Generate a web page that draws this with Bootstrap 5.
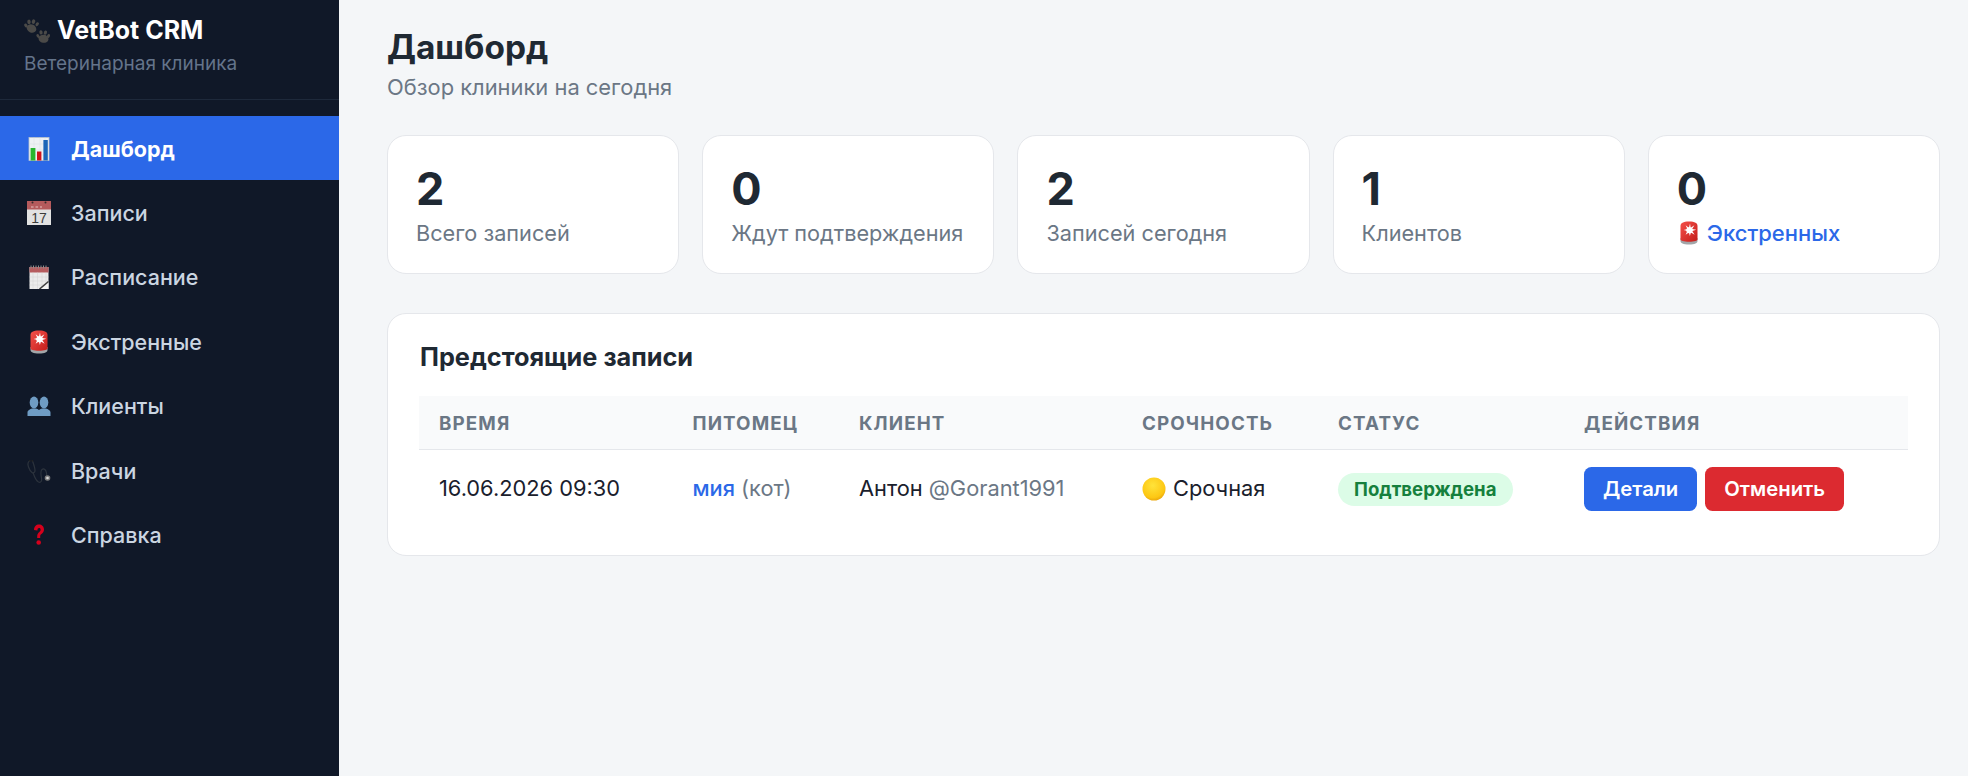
<!DOCTYPE html>
<html lang="ru">
<head>
<meta charset="utf-8">
<title>VetBot CRM</title>
<link href="https://cdn.jsdelivr.net/npm/bootstrap@5.3.0/dist/css/bootstrap.min.css" rel="stylesheet">
<style>
html,body{height:100%}
body{font-family:Inter,"Liberation Sans",sans-serif;font-size:20px;background:#f4f6f8;color:#1f2933;overflow:hidden}
.vb-shell{height:776px}
.vb-side{width:339px;background:#101828;flex:none}
.vb-brand{height:100px;padding:16px 24px 0;border-bottom:1px solid #1e293b}
.vb-brand-name{font-size:25px;font-weight:700;line-height:29px;color:#fff;gap:7px}
.vb-paw{width:26px;height:24px;flex:none;display:block}
.vb-brand-sub{font-size:19px;line-height:26px;color:#64748b;margin-top:6px}
.vb-nav{padding-top:16px}
.vb-nav .nav-link{height:64.4px;padding:1px 0 0 27px;color:#cbd5e1;font-size:21.5px;font-weight:500;gap:20px}
.vb-nav .nav-link.active{background:#2b68e8;color:#fff;font-weight:700}
.vb-ico{width:24px;height:24px;flex:none;display:block}
.vb-main{padding:24px 28px 0 48px;min-width:0}
.vb-title{font-size:33.4px;font-weight:700;line-height:48px;margin:-1px 0 1px;color:#1f2933}
.vb-sub{font-size:21.9px;line-height:30px;color:#6b7785;margin:0 0 33px}
.vb-stats{gap:23px;margin-bottom:39px}
.vb-stat{flex:1 1 0;height:139px;background:#fff;border:1px solid #e5e7eb;border-radius:19px;padding:26px 28px 0}
.vb-num{font-size:45px;font-weight:700;line-height:54px;color:#1f2933}
.vb-lbl{font-size:21.7px;line-height:30px;color:#6b7785;margin-top:2px;gap:6px}
.vb-lbl a{color:#2b68e8;font-weight:500;text-decoration:none;font-size:22px}
.vb-panel{background:#fff;border:1px solid #e5e7eb;border-radius:19px;padding:25px 25px 30px 31px;height:243px}
.vb-h2{font-size:25.3px;font-weight:700;line-height:36px;margin:0 0 20.5px;padding-left:1px;color:#1f2933}
.vb-table{table-layout:fixed;width:1489px;margin:0;font-size:21.8px}
.vb-table>thead>tr>th{background:#f9fafb;color:#6b7785;font-size:18.8px;font-weight:700;letter-spacing:1.1px;text-transform:uppercase;height:54px;padding:3px 20px 0;vertical-align:middle;border-bottom:1px solid #e5e7eb;box-shadow:none}
.vb-table>tbody>tr>td{padding:16.5px 20px 14.5px;vertical-align:middle;border:0;color:#1a202c;height:75px;box-shadow:none;white-space:nowrap}
.vb-c1{width:253.5px}.vb-c2{width:166.5px}.vb-c3{width:283px}.vb-c4{width:196px}.vb-c5{width:246px}
.vb-muted{color:#6b7785}
.vb-pet{color:#2b68e8;font-weight:500;text-decoration:none}
.vb-urg{gap:7px}
.vb-dot{width:24px;height:24px;flex:none;display:block}
.vb-pill{display:inline-block;background:#dcfce7;color:#15803d;font-size:18.6px;font-weight:700;line-height:33px;padding:0 17px 0 16px;border-radius:17px;white-space:nowrap}
.vb-acts{gap:8px}
.vb-btn{font-size:20.3px;font-weight:600;line-height:26px;padding:9px 19px;border-radius:7.5px;border:0;color:#fff}
.vb-btn-b{background:#2b68e8}
.vb-btn-r{background:#dc2a30}
.vb-btn:hover{color:#fff}
</style>
</head>
<body>
<svg width="0" height="0" class="position-absolute" aria-hidden="true">
<defs>
<linearGradient id="g-red" x1="0" y1="0" x2="1" y2="1"><stop offset="0" stop-color="#f4504a"/><stop offset="1" stop-color="#c41d1a"/></linearGradient>
<symbol id="e-paws" viewBox="0 0 26 24">
<g fill="#4b4a48">
<ellipse cx="7.500" cy="9.500" rx="5" ry="4" transform="rotate(25 7.500 9.500)"/>
<ellipse cx="1.900" cy="6.500" rx="1.500" ry="2.100" transform="rotate(-30 1.900 6.500)"/>
<ellipse cx="5" cy="2.900" rx="1.700" ry="2.300" transform="rotate(-10 5 2.900)"/>
<ellipse cx="9.500" cy="2.600" rx="1.700" ry="2.300" transform="rotate(15 9.500 2.600)"/>
<ellipse cx="13.200" cy="5.200" rx="1.500" ry="2.100" transform="rotate(35 13.200 5.200)"/>
<ellipse cx="19.500" cy="19.800" rx="5" ry="4" transform="rotate(10 19.500 19.800)"/>
<ellipse cx="14" cy="17" rx="1.400" ry="2" transform="rotate(-35 14 17)"/>
<ellipse cx="17" cy="13.400" rx="1.600" ry="2.200" transform="rotate(-10 17 13.400)"/>
<ellipse cx="21.400" cy="13.600" rx="1.600" ry="2.200" transform="rotate(15 21.400 13.600)"/>
<ellipse cx="24.500" cy="17" rx="1.400" ry="2" transform="rotate(30 24.500 17)"/>
</g>
</symbol>
<symbol id="e-bars" viewBox="0 0 24 24">
<rect x="2" y="0.500" width="20" height="23" fill="#eef1f4"/>
<rect x="2" y="0.500" width="20" height="23" fill="none" stroke="#b9c3cc" stroke-width=".8"/>
<path d="M2 7h20M2 13h20M2 18h20M7 .5v23M13 .5v23M18 .5v23" stroke="#dbe1e6" stroke-width=".5"/>
<rect x="3.600" y="11" width="4.800" height="12.500" fill="#29b52e"/>
<rect x="10" y="14.500" width="4.400" height="9" fill="#d0121b"/>
<rect x="16.400" y="3" width="4.400" height="20.500" fill="#1c66b8"/>
</symbol>
<symbol id="e-cal" viewBox="0 0 24 24">
<rect x="0" y="0" width="24" height="24" fill="#e2e2e2"/>
<rect x="0" y="0" width="24" height="8.500" fill="#b55a5c"/>
<circle cx="5.500" cy="1.600" r="1" fill="#3a2a2a"/><circle cx="18.500" cy="1.600" r="1" fill="#3a2a2a"/>
<path d="M4 6h2.600M8.500 6h2.600M13 6h2" stroke="#e8c2c2" stroke-width="1"/>
<text x="12" y="21.500" text-anchor="middle" font-family="Liberation Sans,sans-serif" font-size="14" fill="#3c3c3c">17</text>
</symbol>
<symbol id="e-spiral" viewBox="0 0 24 24">
<rect x="2.500" y="2" width="19" height="22" fill="#ebebeb"/>
<rect x="2.500" y="2" width="19" height="5.500" fill="#b65d5f"/>
<path d="M4 .5v3M6.500 .5v3M9 .5v3M11.500 .5v3M14 .5v3M16.500 .5v3M19 .5v3" stroke="#8d8d8d" stroke-width="1"/>
<path d="M2.500 12h19M2.500 16h19M2.500 20h19M6 7.500v16.500M10.500 7.500v16.500M15 7.500v16.500M19 7.500v16.500" stroke="#d3d3d3" stroke-width=".5"/>
<path d="M13 24l8.500-7.500V24z" fill="#f4f4f4"/>
<path d="M12.500 24l9-7.500" stroke="#3f3f3f" stroke-width="1.600"/>
</symbol>
<symbol id="e-light" viewBox="0 0 24 24">
<path d="M3.500 20c0 2 2.500 3.500 8.500 3.500s8.500-1.500 8.500-3.500v-3h-17z" fill="#a2a6a9"/>
<path d="M3.500 5C3.500 2.200 6 .5 12 .5S20.500 2.200 20.500 5v13.500c0 1-3 2.300-8.500 2.300s-8.500-1.300-8.500-2.300z" fill="url(#g-red)"/>
<path d="M13 2.500l.7 4.300 3.700-2.600-2.200 3.900 4 .6-3.900 1.200 2.300 3.800-3.700-2.300-1 3.500-1-3.500-3.300 2.300 1.800-3.800-3.800-1 3.800-.8-1.800-3.900 3.300 2.600z" fill="#fff"/>
<circle cx="12.300" cy="9.300" r="3" fill="#fff"/>
</symbol>
<symbol id="e-busts" viewBox="0 0 24 24">
<g fill="#6f9cc4">
<ellipse cx="7" cy="8.500" rx="4.300" ry="6"/>
<path d="M.5 22v-3.500c0-2.300 2.700-3.300 4.500-4h4c1.800.7 4.500 1.700 4.500 4V22z"/>
<ellipse cx="17" cy="8.500" rx="4.300" ry="6"/>
<path d="M10.500 22v-3.500c0-2.300 2.700-3.300 4.500-4h4c1.800.7 4.500 1.700 4.500 4V22z"/>
</g>
</symbol>
<symbol id="e-steth" viewBox="0 0 24 24">
<g fill="none" stroke="#2c333d" stroke-width="1.200" stroke-linecap="round">
<path d="M2.500 2C.8 3 .5 5 1.500 8c.8 2.300 2 4.500 3.500 5.500 1.600 1 3 0 3-2 0-3-1.500-6.500-2.500-9.500"/>
<path d="M6 13.500c1 3 2.500 8 5.500 9.500 2.500 1 3.500-1 3-4-.5-3-1.500-7 .5-8.500 2-1.500 4 .5 4.500 3.500.2 1.200.2 2.500-.2 3.500"/>
</g>
<circle cx="20.500" cy="19" r="2.800" fill="#7d7d7d"/>
<circle cx="20.500" cy="19" r="1.300" fill="#d8d8d8"/>
<circle cx="2.800" cy="1.800" r=".9" fill="#222"/>
<circle cx="5.300" cy="1.800" r=".9" fill="#222"/>
</symbol>
<symbol id="e-q" viewBox="0 0 24 24">
<path d="M7 7c0-3.500 2.200-5.500 5-5.500s5 2 5 5c0 2.400-1.300 3.500-2.500 4.500-1 .8-1.300 1.300-1.300 2.500v1.500h-3v-2c0-2 1-3 2.100-4 .8-.7 1.300-1.300 1.300-2.300 0-1-.5-1.700-1.500-1.700s-1.700.8-1.700 2.500z" fill="#d6001c"/>
<circle cx="11.700" cy="19.500" r="2.300" fill="#d6001c"/>
</symbol>
<radialGradient id="g-y" cx="45%" cy="35%" r="70%">
<stop offset="0" stop-color="#ffe33a"/><stop offset=".75" stop-color="#fdc713"/><stop offset="1" stop-color="#e59e0a"/>
</radialGradient>
</defs>
</svg>
<div class="d-flex vb-shell">
  <aside class="vb-side d-flex flex-column">
    <div class="vb-brand">
      <div class="vb-brand-name d-flex align-items-center"><svg class="vb-paw"><use href="#e-paws"/></svg><span>VetBot CRM</span></div>
      <div class="vb-brand-sub">Ветеринарная клиника</div>
    </div>
    <nav class="nav flex-column vb-nav">
      <a class="nav-link active d-flex align-items-center" href="#"><svg class="vb-ico"><use href="#e-bars"/></svg>Дашборд</a>
      <a class="nav-link d-flex align-items-center" href="#"><svg class="vb-ico"><use href="#e-cal"/></svg>Записи</a>
      <a class="nav-link d-flex align-items-center" href="#"><svg class="vb-ico"><use href="#e-spiral"/></svg>Расписание</a>
      <a class="nav-link d-flex align-items-center" href="#"><svg class="vb-ico"><use href="#e-light"/></svg>Экстренные</a>
      <a class="nav-link d-flex align-items-center" href="#"><svg class="vb-ico"><use href="#e-busts"/></svg>Клиенты</a>
      <a class="nav-link d-flex align-items-center" href="#"><svg class="vb-ico"><use href="#e-steth"/></svg>Врачи</a>
      <a class="nav-link d-flex align-items-center" href="#"><svg class="vb-ico"><use href="#e-q"/></svg>Справка</a>
    </nav>
  </aside>
  <main class="vb-main flex-grow-1">
    <h1 class="vb-title">Дашборд</h1>
    <p class="vb-sub">Обзор клиники на сегодня</p>
    <div class="d-flex vb-stats">
      <div class="vb-stat"><div class="vb-num">2</div><div class="vb-lbl">Всего записей</div></div>
      <div class="vb-stat"><div class="vb-num">0</div><div class="vb-lbl">Ждут подтверждения</div></div>
      <div class="vb-stat"><div class="vb-num">2</div><div class="vb-lbl">Записей сегодня</div></div>
      <div class="vb-stat"><div class="vb-num">1</div><div class="vb-lbl">Клиентов</div></div>
      <div class="vb-stat"><div class="vb-num">0</div><div class="vb-lbl d-flex align-items-center"><svg class="vb-ico"><use href="#e-light"/></svg><a href="#">Экстренных</a></div></div>
    </div>
    <section class="vb-panel">
      <h2 class="vb-h2">Предстоящие записи</h2>
      <table class="table vb-table">
        <colgroup><col class="vb-c1"><col class="vb-c2"><col class="vb-c3"><col class="vb-c4"><col class="vb-c5"><col></colgroup>
        <thead><tr><th>Время</th><th>Питомец</th><th>Клиент</th><th>Срочность</th><th>Статус</th><th>Действия</th></tr></thead>
        <tbody><tr>
          <td>16.06.2026 09:30</td>
          <td><a class="vb-pet" href="#">мия</a> <span class="vb-muted">(кот)</span></td>
          <td>Антон <span class="vb-muted">@Gorant1991</span></td>
          <td><span class="d-flex align-items-center vb-urg"><svg class="vb-dot" viewBox="0 0 24 24"><circle cx="12" cy="12" r="11.500" fill="url(#g-y)"/></svg>Срочная</span></td>
          <td><span class="vb-pill">Подтверждена</span></td>
          <td><div class="d-flex vb-acts"><button class="btn vb-btn vb-btn-b">Детали</button><button class="btn vb-btn vb-btn-r">Отменить</button></div></td>
        </tr></tbody>
      </table>
    </section>
  </main>
</div>
<script src="https://cdn.jsdelivr.net/npm/bootstrap@5.3.0/dist/js/bootstrap.bundle.min.js"></script>
</body>
</html>
